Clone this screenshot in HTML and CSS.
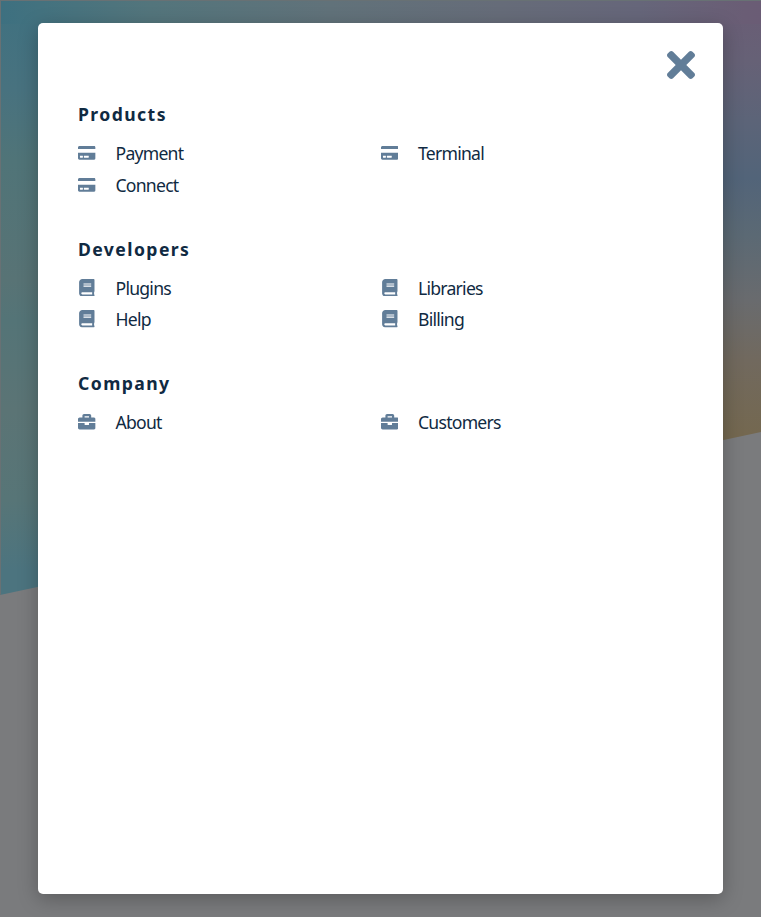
FILE: index.html
```
<!DOCTYPE html>
<html lang="en">
<head>
<meta charset="utf-8">
<title>Menu</title>
<link rel="stylesheet" href="styles.css">
</head>
<body>
<svg class="symbols" aria-hidden="true">
  <symbol id="card" viewBox="0 0 576 512"><path d="M0 432c0 26.500 21.500 48 48 48h480c26.500 0 48-21.500 48-48V256H0v176zm192-68c0-6.600 5.400-12 12-12h136c6.600 0 12 5.400 12 12v40c0 6.600-5.400 12-12 12H204c-6.600 0-12-5.400-12-12v-40zm-128 0c0-6.600 5.400-12 12-12h72c6.600 0 12 5.400 12 12v40c0 6.600-5.400 12-12 12H76c-6.600 0-12-5.400-12-12v-40zM576 80v48H0V80c0-26.500 21.500-48 48-48h480c26.500 0 48 21.500 48 48z"/></symbol>
  <symbol id="book" viewBox="0 0 448 512"><path d="M448 360V24c0-13.300-10.700-24-24-24H96C43 0 0 43 0 96v320c0 53 43 96 96 96h328c13.300 0 24-10.700 24-24v-16c0-7.500-3.500-14.300-8.900-18.700-4.200-15.400-4.200-59.300 0-74.700 5.400-4.300 8.900-11.100 8.900-18.600zM128 134c0-3.300 2.700-6 6-6h212c3.300 0 6 2.700 6 6v20c0 3.300-2.700 6-6 6H134c-3.300 0-6-2.700-6-6v-20zm0 64c0-3.300 2.700-6 6-6h212c3.300 0 6 2.700 6 6v20c0 3.300-2.700 6-6 6H134c-3.300 0-6-2.700-6-6v-20zm253.400 250H96c-17.700 0-32-14.300-32-32 0-17.600 14.400-32 32-32h285.400c-1.900 17.100-1.900 46.900 0 64z"/></symbol>
  <symbol id="briefcase" viewBox="0 0 512 512"><path d="M320 336c0 8.840-7.160 16-16 16h-96c-8.840 0-16-7.160-16-16v-48H0v144c0 25.600 22.400 48 48 48h416c25.600 0 48-22.400 48-48V288H320v48zm144-208h-80V80c0-25.600-22.400-48-48-48H176c-25.600 0-48 22.400-48 48v48H48c-25.600 0-48 22.400-48 48v80h512v-80c0-25.600-22.400-48-48-48zm-144 0H192V96h128v32z"/></symbol>
</svg>
<div class="hero"></div>
<div class="overlay">
  <aside class="sidebar">
    <button class="close-btn" aria-label="Close">
      <svg viewBox="0 80 352 352"><path d="M242.720 256l100.070-100.070c12.280-12.280 12.280-32.190 0-44.480l-22.240-22.240c-12.280-12.280-32.190-12.280-44.480 0L176 189.280 75.930 89.210c-12.280-12.280-32.190-12.280-44.480 0L9.210 111.450c-12.280 12.280-12.280 32.190 0 44.480L109.280 256 9.210 356.070c-12.280 12.280-12.280 32.190 0 44.480l22.240 22.240c12.280 12.280 32.200 12.280 44.480 0L176 322.720l100.070 100.070c12.280 12.280 32.200 12.280 44.480 0l22.240-22.240c12.280-12.280 12.280-32.190 0-44.480L242.720 256z"/></svg>
    </button>
    <nav>
      <section class="group">
        <h4>Products</h4>
        <div class="links">
          <a><svg><use href="#card"/></svg><span>Payment</span></a>
          <a><svg><use href="#card"/></svg><span>Terminal</span></a>
          <a><svg><use href="#card"/></svg><span>Connect</span></a>
        </div>
      </section>
      <section class="group">
        <h4>Developers</h4>
        <div class="links">
          <a><svg><use href="#book"/></svg><span>Plugins</span></a>
          <a><svg><use href="#book"/></svg><span>Libraries</span></a>
          <a><svg><use href="#book"/></svg><span>Help</span></a>
          <a><svg><use href="#book"/></svg><span>Billing</span></a>
        </div>
      </section>
      <section class="group">
        <h4>Company</h4>
        <div class="links">
          <a><svg><use href="#briefcase"/></svg><span>About</span></a>
          <a><svg><use href="#briefcase"/></svg><span>Customers</span></a>
        </div>
      </section>
    </nav>
  </aside>
</div>
</body>
</html>
```
FILE: styles.css
```
* { box-sizing: border-box; }
body {
  margin: 0;
  height: 917px;
  overflow: hidden;
  background: #7a7b7d;
  color: #102a42;
  font-family: "Segoe UI", "Noto Sans", sans-serif;
}
.symbols { display: none; }
.hero {
  position: absolute;
  inset: 0;
  background:
    linear-gradient(#687174, #687174) 0 0 / 100% 1px no-repeat,
    linear-gradient(#687174, #687174) 0 0 / 1px 100% no-repeat,
    linear-gradient(90deg, #3d7080 0, #43727f 40px, #53757c 150px, #61727a 330px, #666c79 500px, #66667a 640px, #6a5d75 745px, #6a5c75 100%) 0 0 / 100% 24px no-repeat,
    linear-gradient(#3f7180 0, #48727f 90px, #507478 160px, #587375 280px, #547477 320px, #5b7475 410px, #577577 500px, #4c747f 570px, #4c747f 100%) 0 0 / 60px 100% no-repeat,
    linear-gradient(#6a5c75 0, #666176 60px, #5c6478 120px, #526479 178px, #5b6974 235px, #696b6e 300px, #71695e 360px, #746850 435px) 100% 0 / 60px 460px no-repeat;
  clip-path: polygon(0 0, 100% 0, 100% 432px, 0 595px);
}
.overlay {
  position: relative;
  display: flex;
  height: 917px;
  padding: 23px 38px;
}
.sidebar {
  display: flex;
  flex-direction: column;
  width: 685px;
  height: 871px;
  padding: 28px 28px 0 40px;
  border-radius: 5px;
  background: #fff;
  box-shadow: 0 5px 20px rgba(0, 0, 0, .26);
}
.close-btn {
  align-self: flex-end;
  width: 28px;
  height: 28px;
  padding: 0;
  border: 0;
  background: none;
}
.close-btn svg { display: block; width: 28px; height: 28px; fill: #617d98; }
nav { padding-top: 23px; }
.group { height: 134.500px; }
h4 {
  margin: 0 0 11.400px;
  font-size: 17.600px;
  line-height: 24px;
  font-weight: 700;
  letter-spacing: 1.420px;
}
.links {
  display: grid;
  grid-template-columns: 302.500px 302.500px;
  grid-auto-rows: 31.500px;
}
.links a { display: flex; align-items: center; }
.links svg {
  width: 17.600px;
  height: 17.600px;
  margin-right: 19.900px;
  fill: #617d98;
}
.links span {
  font-size: 17.600px;
  line-height: 24px;
  letter-spacing: -.75px;
}
```
